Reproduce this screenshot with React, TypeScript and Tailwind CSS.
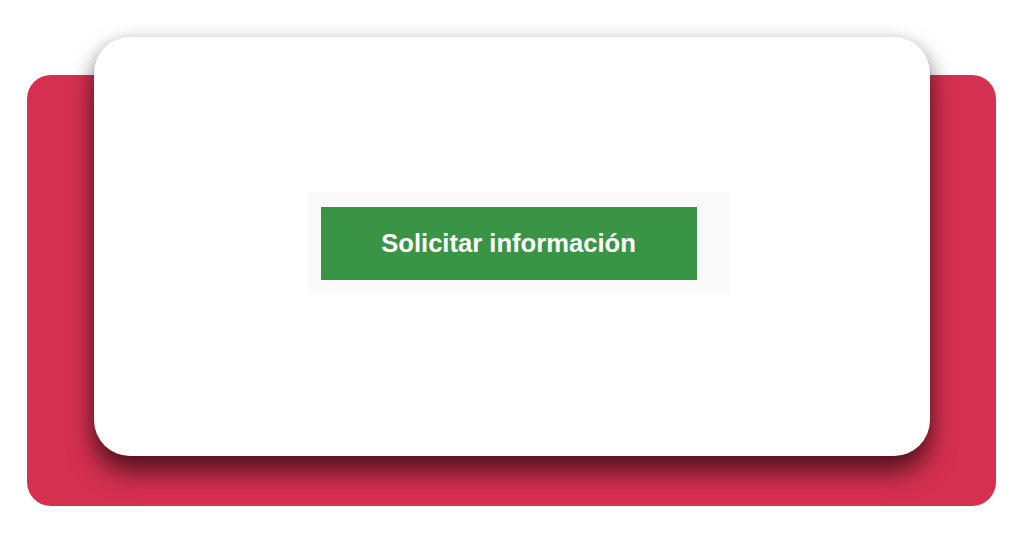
export default function App() {
  return (
    <div className="w-[1024px] h-[536px] bg-white overflow-hidden pt-[75px] pl-[27px]">
      <div className="flow-root w-[969px] h-[431px] rounded-[24px] bg-[#d63050]">
        <div className="relative ml-[67px] -mt-[38px] w-[836px] h-[419px] rounded-[36px] bg-white shadow-[0_0_14px_rgba(0,0,0,0.12),0_16px_26px_rgba(0,0,0,0.6)] flex items-center justify-center">
          <div className="bg-[#fafafa] w-[421px] h-[103px] mt-[-7px] ml-[14px] pl-[12px] pt-[15px]">
            <div className="w-[376px] h-[73px] bg-[#3a9446] flex items-center justify-center">
              <span className="text-white font-bold text-[25.6px] font-['Liberation_Sans',Arial,sans-serif]">Solicitar información</span>
            </div>
          </div>
        </div>
      </div>
    </div>
  );
}
